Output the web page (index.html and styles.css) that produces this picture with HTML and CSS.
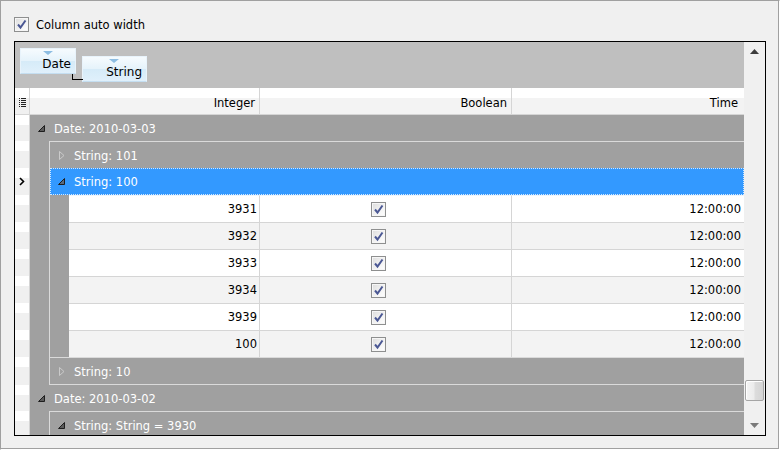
FILE: index.html
```html
<!DOCTYPE html>
<html>
<head>
<meta charset="utf-8">
<link rel="stylesheet" href="styles.css">
</head>
<body>
<div class="frame">
  <div class="frame-in">
    <label class="autow">
      <span class="cb"><svg width="13" height="13" viewBox="0 0 13 13"><path d="M3 6.5 L5.5 9.5 L10.5 2.5" fill="none" stroke="#4b5894" stroke-width="2"/></svg></span>
      <span class="autow-text">Column auto width</span>
    </label>
    <div class="grid">
      <div class="main">
        <div class="grouppanel">
          <div class="gbtn gbtn-date"><span class="sortarrow"></span><span class="gtext">Date</span></div>
          <div class="gbtn gbtn-string"><span class="sortarrow"></span><span class="gtext">String</span></div>
        </div>
        <div class="header">
          <div class="ind hind"><svg width="7" height="9" viewBox="0 0 7 9"><g fill="#222"><rect x="0" y="0" width="1" height="1"/><rect x="2" y="0" width="5" height="1"/><rect x="0" y="2" width="1" height="1"/><rect x="2" y="2" width="5" height="1"/><rect x="0" y="4" width="1" height="1"/><rect x="2" y="4" width="5" height="1"/><rect x="0" y="6" width="1" height="1"/><rect x="2" y="6" width="5" height="1"/><rect x="0" y="8" width="1" height="1"/><rect x="2" y="8" width="5" height="1"/></g></svg></div>
          <div class="hcell c-int">Integer</div>
          <div class="hcell c-bool">Boolean</div>
          <div class="hcell c-time">Time</div>
        </div>
        <div class="body">
          <div class="row lvl1">
            <div class="ind"></div>
            <div class="gcontent"><span class="ico"><svg width="7" height="7" viewBox="0 0 7 7"><path d="M6.5 0.5 L6.5 6.5 L0.5 6.5 Z" fill="#5a5a5a" stroke="#1e1e1e" stroke-linejoin="round"/></svg></span><span class="gtxt">Date: 2010-03-03</span></div>
          </div>
          <div class="row lvl2">
            <div class="ind"></div>
            <div class="indent"></div>
            <div class="gbox"><span class="ico"><svg width="7" height="9" viewBox="0 0 7 9"><path d="M1.5 0.5 L6 4.5 L1.5 8.5 Z" fill="none" stroke="#cacaca"/></svg></span><span class="gtxt">String: 101</span></div>
          </div>
          <div class="row lvl2 sel">
            <div class="ind"><svg width="6" height="9" viewBox="0 0 6 9"><path d="M1 1 L4.5 4.5 L1 8" fill="none" stroke="#000" stroke-width="1.6"/></svg></div>
            <div class="indent"></div>
            <div class="edge"></div>
            <div class="selbox"><span class="ico"><svg width="7" height="7" viewBox="0 0 7 7"><path d="M6.5 0.5 L6.5 6.5 L0.5 6.5 Z" fill="#5a6b80" stroke="#1e1e1e" stroke-linejoin="round"/></svg></span><span class="gtxt">String: 100</span></div>
          </div>
          <div class="row data first">
            <div class="ind"></div><div class="indent"></div><div class="edge"></div><div class="indent"></div>
            <div class="cell d-int">3931</div>
            <div class="cell d-bool"><span class="cb"><svg width="13" height="13" viewBox="0 0 13 13"><path d="M3 6.5 L5.5 9.5 L10.5 2.5" fill="none" stroke="#4b5894" stroke-width="2"/></svg></span></div>
            <div class="cell d-time">12:00:00</div>
          </div>
          <div class="row data alt">
            <div class="ind"></div><div class="indent"></div><div class="edge"></div><div class="indent"></div>
            <div class="cell d-int">3932</div>
            <div class="cell d-bool"><span class="cb"><svg width="13" height="13" viewBox="0 0 13 13"><path d="M3 6.5 L5.5 9.5 L10.5 2.5" fill="none" stroke="#4b5894" stroke-width="2"/></svg></span></div>
            <div class="cell d-time">12:00:00</div>
          </div>
          <div class="row data">
            <div class="ind"></div><div class="indent"></div><div class="edge"></div><div class="indent"></div>
            <div class="cell d-int">3933</div>
            <div class="cell d-bool"><span class="cb"><svg width="13" height="13" viewBox="0 0 13 13"><path d="M3 6.5 L5.5 9.5 L10.5 2.5" fill="none" stroke="#4b5894" stroke-width="2"/></svg></span></div>
            <div class="cell d-time">12:00:00</div>
          </div>
          <div class="row data alt">
            <div class="ind"></div><div class="indent"></div><div class="edge"></div><div class="indent"></div>
            <div class="cell d-int">3934</div>
            <div class="cell d-bool"><span class="cb"><svg width="13" height="13" viewBox="0 0 13 13"><path d="M3 6.5 L5.5 9.5 L10.5 2.5" fill="none" stroke="#4b5894" stroke-width="2"/></svg></span></div>
            <div class="cell d-time">12:00:00</div>
          </div>
          <div class="row data">
            <div class="ind"></div><div class="indent"></div><div class="edge"></div><div class="indent"></div>
            <div class="cell d-int">3939</div>
            <div class="cell d-bool"><span class="cb"><svg width="13" height="13" viewBox="0 0 13 13"><path d="M3 6.5 L5.5 9.5 L10.5 2.5" fill="none" stroke="#4b5894" stroke-width="2"/></svg></span></div>
            <div class="cell d-time">12:00:00</div>
          </div>
          <div class="row data alt">
            <div class="ind"></div><div class="indent"></div><div class="edge"></div><div class="indent"></div>
            <div class="cell d-int">100</div>
            <div class="cell d-bool"><span class="cb"><svg width="13" height="13" viewBox="0 0 13 13"><path d="M3 6.5 L5.5 9.5 L10.5 2.5" fill="none" stroke="#4b5894" stroke-width="2"/></svg></span></div>
            <div class="cell d-time">12:00:00</div>
          </div>
          <div class="row lvl2 last">
            <div class="ind"></div>
            <div class="indent"></div>
            <div class="gbox"><span class="ico"><svg width="7" height="9" viewBox="0 0 7 9"><path d="M1.5 0.5 L6 4.5 L1.5 8.5 Z" fill="none" stroke="#cacaca"/></svg></span><span class="gtxt">String: 10</span></div>
          </div>
          <div class="row lvl1">
            <div class="ind"></div>
            <div class="gcontent"><span class="ico"><svg width="7" height="7" viewBox="0 0 7 7"><path d="M6.5 0.5 L6.5 6.5 L0.5 6.5 Z" fill="#5a5a5a" stroke="#1e1e1e" stroke-linejoin="round"/></svg></span><span class="gtxt">Date: 2010-03-02</span></div>
          </div>
          <div class="row lvl2">
            <div class="ind"></div>
            <div class="indent"></div>
            <div class="gbox"><span class="ico"><svg width="7" height="7" viewBox="0 0 7 7"><path d="M6.5 0.5 L6.5 6.5 L0.5 6.5 Z" fill="#5a5a5a" stroke="#1e1e1e" stroke-linejoin="round"/></svg></span><span class="gtxt">String: String = 3930</span></div>
          </div>
        </div>
      </div>
      <div class="vscroll">
        <div class="sbtn sbtn-up"><svg width="9" height="5" viewBox="0 0 9 5"><path d="M0 5 L4.5 0 L9 5 Z" fill="#3c3c3c"/></svg></div>
        <div class="track"><div class="thumb"></div></div>
        <div class="sbtn sbtn-down"><svg width="9" height="5" viewBox="0 0 9 5"><path d="M0 0 L9 0 L4.5 5 Z" fill="#7a7a7a"/></svg></div>
      </div>
    </div>
  </div>
</div>
</body>
</html>
```

FILE: styles.css
```css
* { box-sizing: border-box; }
html, body { margin: 0; padding: 0; }
body {
  width: 780px;
  height: 450px;
  background: #f0f0f0;
  font-family: "DejaVu Sans", "Liberation Sans", sans-serif;
  font-size: 11.5px;
  color: #000;
  overflow: hidden;
}
.frame {
  width: 780px;
  height: 450px;
  border-top: 1px solid #a0a0a0;
  border-left: 1px solid #a0a0a0;
  border-right: 1px solid #ffffff;
  border-bottom: 1px solid #ffffff;
}
.frame-in {
  height: 100%;
  border-right: 1px solid #a0a0a0;
  border-bottom: 1px solid #a0a0a0;
  padding: 15px 0 0 13px;
}
.autow {
  display: flex;
  align-items: center;
  height: 16px;
  margin-bottom: 9px;
}
.autow-text { margin-left: 7px; padding-top: 1px; }
.cb {
  display: inline-flex;
  width: 15px;
  height: 15px;
  border: 1px solid #8e8f8f;
  background: linear-gradient(135deg, #dcdcdc 0%, #f4f4f4 60%, #ffffff 100%);
  box-shadow: inset 0 0 0 1px #f6f6f6;
  align-items: center;
  justify-content: center;
}
.grid {
  width: 752px;
  height: 395px;
  border: 1px solid #000;
  display: flex;
  background: #ffffff;
}
.main {
  width: 729px;
  display: flex;
  flex-direction: column;
  overflow: hidden;
}
.grouppanel {
  height: 46px;
  flex: none;
  background: #bfbfbf;
  display: flex;
  align-items: flex-start;
  padding: 6px 0 0 5px;
  gap: 6px;
}
.gbtn {
  height: 26px;
  display: flex;
  flex-direction: column;
  border: 1px solid #e8f3fb;
  border-bottom-color: #c4def1;
  background: linear-gradient(#f6fbfe 0%, #e6f3fb 48%, #d6ebf8 52%, #e0f0fb 100%);
  padding: 1px 4px 0 0;
}
.gbtn-date { width: 56px; }
.gbtn-string {
  width: 65px;
  margin-top: 8px;
  position: relative;
}
.gbtn-string::before {
  content: "";
  position: absolute;
  left: -11px;
  top: 17px;
  width: 10px;
  height: 5px;
  border-left: 1px solid #000;
  border-bottom: 1px solid #000;
}
.sortarrow {
  width: 0;
  height: 0;
  border-left: 5px solid transparent;
  border-right: 5px solid transparent;
  border-top: 4px solid #8dbde2;
  margin-left: 22px;
  margin-top: 1px;
}
.gbtn-string .sortarrow { margin-left: 26px; }
.gtext {
  align-self: flex-end;
  line-height: 13px;
  margin-top: 3px;
  font-size: 12px;
}
.header {
  height: 27px;
  flex: none;
  display: flex;
  border-bottom: 1px solid #d5d5d5;
  background: linear-gradient(#ffffff 0, #ffffff 10px, #f3f3f3 10px, #f3f3f3 100%);
}
.ind {
  width: 15px;
  flex: none;
  border-right: 1px solid #d5d5d5;
  background: linear-gradient(#ffffff 0, #ffffff 10px, #f0f0f0 10px, #f0f0f0 100%);
  display: flex;
  align-items: center;
  padding-left: 4px;
}
.hind { padding-top: 3px; }
.hcell {
  display: flex;
  align-items: center;
  justify-content: flex-end;
  padding-right: 4px;
  border-right: 1px solid #d5d5d5;
  padding-top: 4px;
}
.c-int { width: 230px; }
.c-bool { width: 252px; }
.c-time { flex: 1; border-right: none; padding-right: 6px; }
.body {
  flex: 1;
  overflow: hidden;
  background: #a0a0a0;
}
.row {
  display: flex;
  height: 27px;
}
.row.lvl1 { height: 26px; }
.gcontent, .gbox, .selbox {
  flex: 1;
  display: flex;
  align-items: center;
  background: #a0a0a0;
  color: #ffffff;
  padding-left: 8px;
}
.gbox {
  border-left: 1px solid #dadada;
  border-top: 1px solid #dadada;
}
.row.last { height: 28px; }
.row.last .gbox { border-bottom: 1px solid #dadada; }
.indent {
  width: 19px;
  flex: none;
  background: #a0a0a0;
}
.edge {
  width: 1px;
  flex: none;
  background: #dadada;
}
.selbox {
  background: #3399ff;
  border: 1px dotted #d2e8ff;
  padding-left: 7px;
}
.ico {
  width: 7px;
  height: 9px;
  display: flex;
  align-items: center;
  justify-content: center;
  margin-right: 9px;
}
.gtxt { padding-top: 1px; }
.cell {
  display: flex;
  align-items: center;
  border-top: 1px solid #d5d5d5;
  border-right: 1px solid #d5d5d5;
  background: #ffffff;
}
.row.alt .cell { background: #f3f3f3; }
.row.first .cell { border-top-color: #eef5fd; }
.d-int {
  width: 191px;
  justify-content: flex-end;
  padding-right: 2px;
}
.d-bool {
  width: 252px;
  padding-left: 111px;
}
.d-time {
  flex: 1;
  justify-content: flex-end;
  padding-right: 3px;
  border-right: none;
}
.vscroll {
  width: 21px;
  flex: none;
  background: #f0f0f0;
  display: flex;
  flex-direction: column;
}
.sbtn {
  height: 20px;
  flex: none;
  display: flex;
  align-items: center;
  justify-content: center;
}
.sbtn-up { align-items: flex-end; padding-bottom: 8px; }
.track {
  flex: 1;
  display: flex;
  flex-direction: column;
}
.thumb {
  margin: auto 1px 14px 1px;
  height: 21px;
  border: 1px solid #a5a5a5;
  border-radius: 2px;
  background: linear-gradient(to right, #f4f4f4 0%, #ececec 45%, #dcdcdc 55%, #d4d4d4 100%);
  box-shadow: inset 1px 1px 0 #ffffff;
}
```
